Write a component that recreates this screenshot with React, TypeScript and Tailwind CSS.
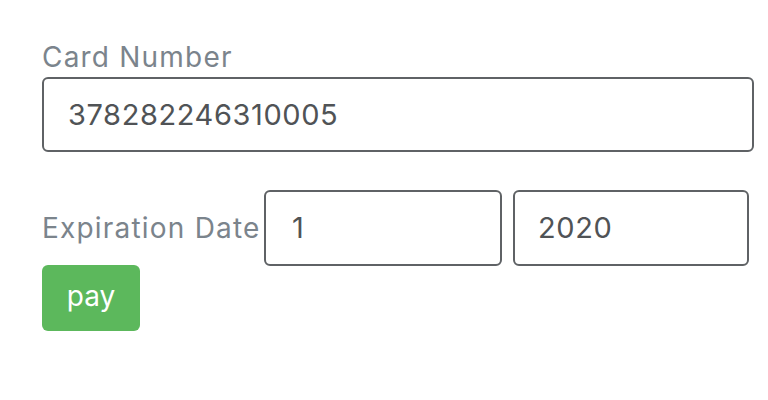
import React from "react";

export default function App() {
  return (
    <div className="w-[768px] h-[400px] bg-white pl-[42px] pt-[41px]" style={{ fontFamily: "Inter, 'Open Sans', sans-serif" }}>
      <div className="text-[28px] leading-[32px] tracking-[1.2px] text-[#7b848c]">Card Number</div>
      <div className="mt-[4px] w-[712px] h-[75px] border-2 border-[#5f6265] rounded-[6px] flex items-center pl-[24px] text-[29px] tracking-[0.6px] text-[#505356]">
        378282246310005
      </div>
      <div className="mt-[38px] flex items-center">
        <div className="text-[28px] tracking-[1.2px] text-[#7b848c] w-[222px] leading-[32px] whitespace-nowrap">Expiration Date</div>
        <div className="w-[238px] h-[76px] border-2 border-[#5f6265] rounded-[6px] flex items-center pl-[26px] text-[29px] text-[#505356]">1</div>
        <div className="ml-[11px] w-[236px] h-[76px] border-2 border-[#5f6265] rounded-[6px] flex items-center pl-[23px] text-[29px] tracking-[0.6px] text-[#505356]">2020</div>
      </div>
      <div className="w-[98px] h-[66px] -mt-[1px] bg-[#5cb85c] rounded-[6px] flex items-center justify-center text-white text-[28px] pb-[4px]">pay</div>
    </div>
  );
}
